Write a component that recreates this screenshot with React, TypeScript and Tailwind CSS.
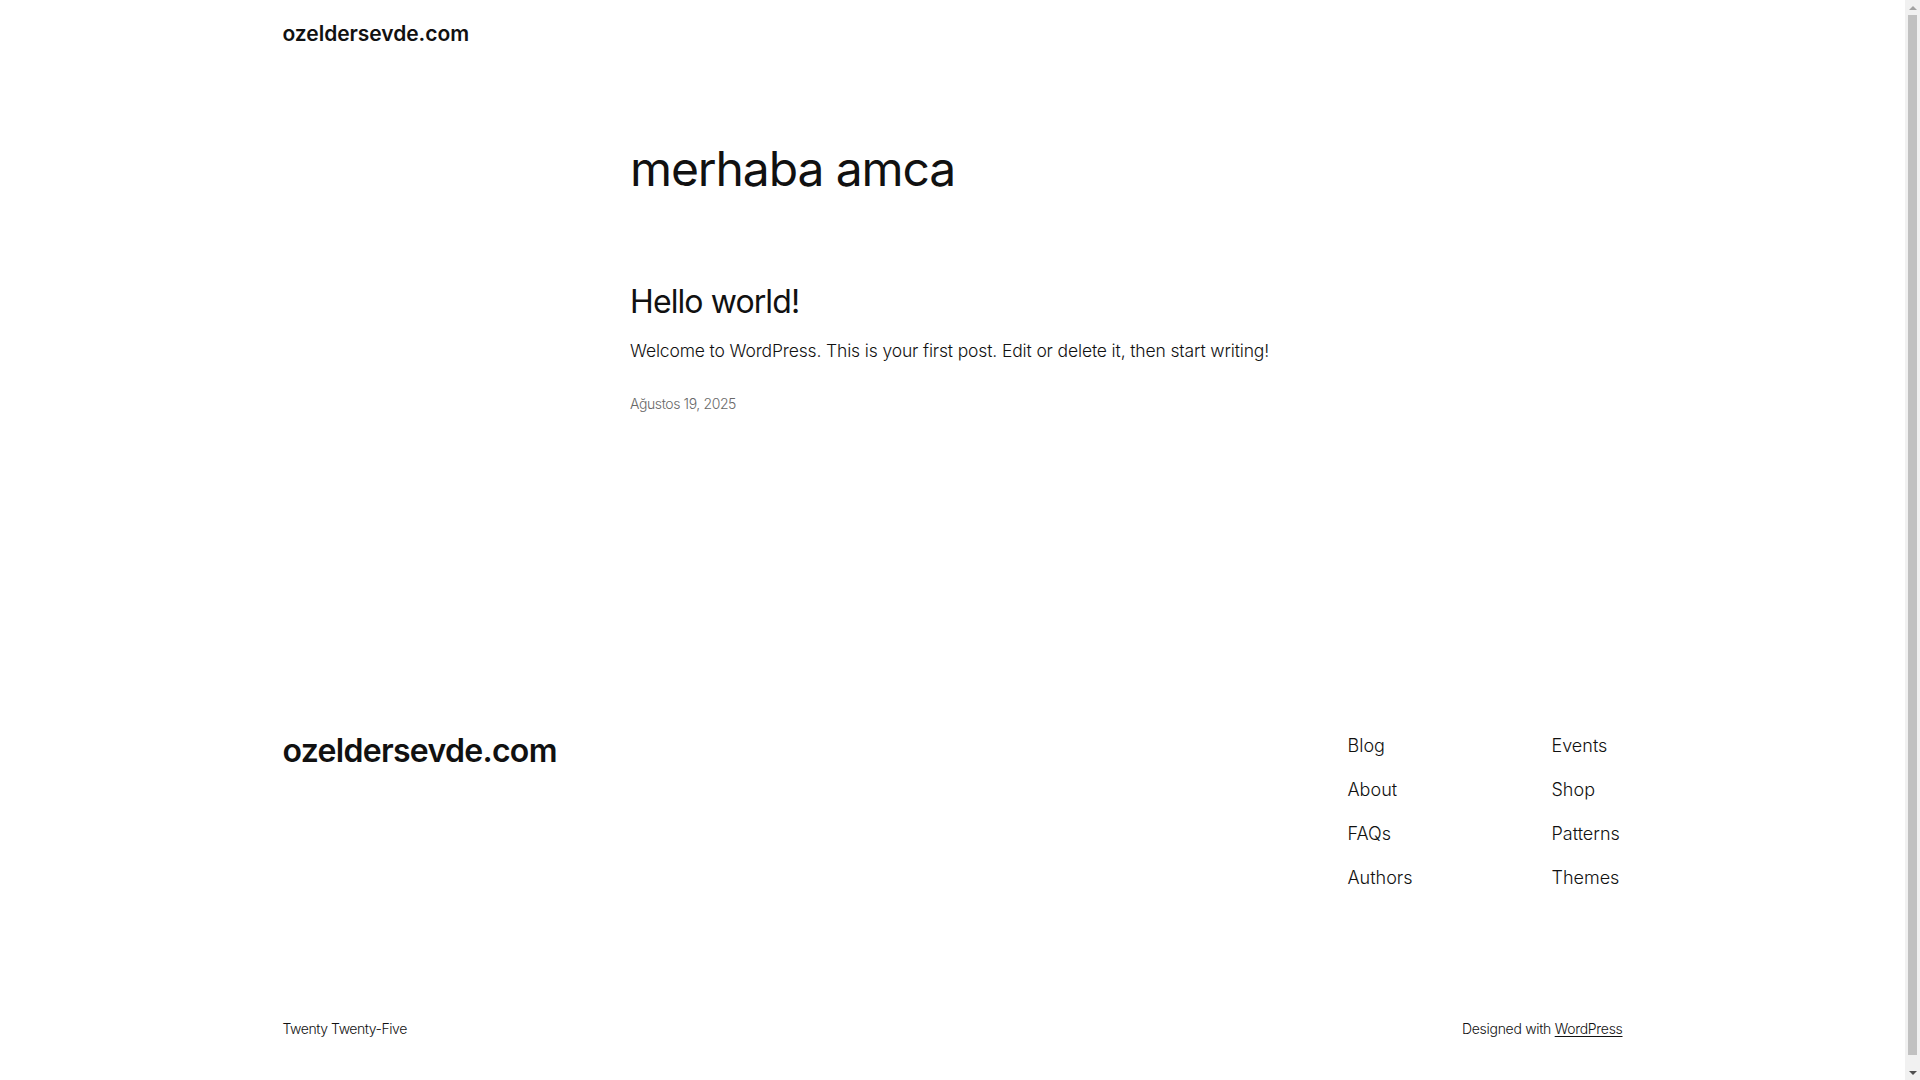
import React from "react";

function Scrollbar() {
  return (
    <div className="fixed right-0 top-0 flex h-screen w-[15px] flex-col items-center bg-[#f1f1f1]">
      <div className="flex h-[15px] w-full items-center justify-center">
        <div className="h-0 w-0 border-x-[4px] border-b-[4px] border-x-transparent border-b-[#a3a3a3]" />
      </div>
      <div className="h-[1040px] w-[9px] bg-[#c1c1c1]" />
      <div className="flex-1" />
      <div className="flex h-[15px] w-full items-center justify-center">
        <div className="h-0 w-0 border-x-[4px] border-t-[4px] border-x-transparent border-t-[#505050]" />
      </div>
    </div>
  );
}

export default function App() {
  return (
    <div className="w-[1905px] bg-white font-['Inter',sans-serif] text-[#111111] antialiased">
      <header className="mx-auto w-[1340px] pt-[20px]">
        <div className="text-[21px] font-semibold leading-[28px] tracking-[-0.05px]">ozeldersevde.com</div>
      </header>

      <main className="mx-auto w-[645px]">
        <h1 className="mt-[94px] text-[48px] font-normal leading-[54px] tracking-[-1.1px]">merhaba amca</h1>
        <h2 className="mt-[86px] text-[32px] font-normal leading-[40px] tracking-[-0.9px]">Hello world!</h2>
        <p className="mt-[17px] text-[17.5px] font-light leading-[24px] tracking-[-0.14px]">
          Welcome to WordPress. This is your first post. Edit or delete it, then start writing!
        </p>
        <div className="mt-[31px] text-[14px] font-light leading-[20px] tracking-[-0.4px] text-[#686868]">
          Ağustos 19, 2025
        </div>
      </main>

      <footer className="mx-auto w-[1340px] pb-[52px]">
        <div className="mt-[317px] flex items-start justify-between">
          <div className="text-[32px] font-semibold leading-[40px] tracking-[-0.7px]">ozeldersevde.com</div>
          <nav className="flex pt-[2.5px] text-[18px] font-light leading-[24px]">
            <ul className="flex w-[204px] flex-col gap-[20px]">
              <li>Blog</li>
              <li>About</li>
              <li>FAQs</li>
              <li>Authors</li>
            </ul>
            <ul className="flex w-[71px] flex-col gap-[20px]">
              <li>Events</li>
              <li>Shop</li>
              <li>Patterns</li>
              <li>Themes</li>
            </ul>
          </nav>
        </div>
        <div className="mt-[129px] flex items-center justify-between text-[14px] font-light leading-[20px] tracking-[-0.3px]">
          <div className="tracking-[-0.45px]">Twenty Twenty-Five</div>
          <div>
            Designed with <a className="underline underline-offset-[2px]">WordPress</a>
          </div>
        </div>
      </footer>
      <Scrollbar />
    </div>
  );
}
